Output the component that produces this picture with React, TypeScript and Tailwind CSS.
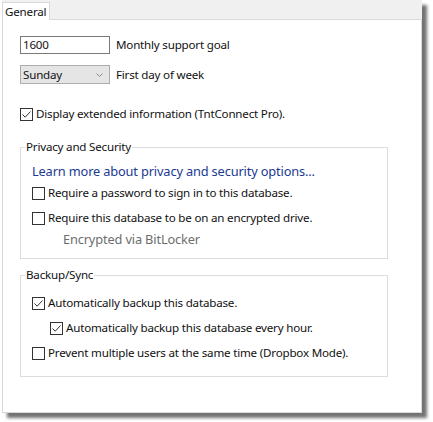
import React from "react";

const font = { fontFamily: '"Noto Sans", "Segoe UI", sans-serif' };

function Check({ checked }: { checked?: boolean }) {
  return (
    <span className="w-[13px] h-[13px] border border-[#333333] bg-white flex items-center justify-center shrink-0">
      {checked && (
        <svg width="11" height="11" viewBox="0 0 11 11">
          <path d="M1.5 5.5 L4.2 8.2 L9.5 2.5" fill="none" stroke="#333" strokeWidth="1" />
        </svg>
      )}
    </span>
  );
}

function CheckRow({ checked, label, className = "" }: { checked?: boolean; label: string; className?: string }) {
  return (
    <div className={"flex items-center h-4 gap-[3px] " + className}>
      <Check checked={checked} />
      <span className="whitespace-nowrap">{label}</span>
    </div>
  );
}

export default function App() {
  return (
    <div className="w-[433px] h-[422px] bg-white text-[11.6px] tracking-[-0.2px] text-[#111] pl-[2px]" style={font}>
      <div className="w-[420px] h-[413px] flex flex-col bg-white shadow-[5px_5px_3px_rgba(0,0,0,0.55)]">
        <div className="h-[20px] flex bg-[#f0f0f0] shrink-0">
          <div className="mt-[2px] w-[48px] bg-white border-l border-t border-r border-[#d9d9d9] flex items-center pl-[2px] leading-4">
            General
          </div>
          <div className="flex-1 border-b border-[#d9d9d9]" />
        </div>
        <div className="flex-1 border-l border-r border-b border-[#d9d9d9] pl-[17px] pt-[16px] leading-4">
          <div className="flex items-center gap-[6px]">
            <div className="w-[90px] h-[18px] border border-[#7a7a7a] flex items-center pl-[2px]">1600</div>
            <span>Monthly support goal</span>
          </div>
          <div className="flex items-center gap-[6px] mt-[11px]">
            <div className="w-[90px] h-[19px] border border-[#adadad] bg-[#e5e5e5] flex items-center justify-between pl-[2px] pr-[6px]">
              <span>Sunday</span>
              <svg width="7" height="4" viewBox="0 0 7 4">
                <path d="M0.5 0.5 L3.5 3.5 L6.5 0.5" fill="none" stroke="#8a8a8a" strokeWidth="1" />
              </svg>
            </div>
            <span>First day of week</span>
          </div>
          <CheckRow checked label="Display extended information (TntConnect Pro)." className="mt-[22px]" />

          <fieldset className="mt-[17px] w-[368px] border border-[#dcdcdc] pl-[11px] pb-[11px]">
            <legend className="ml-[-7px] px-[1px] leading-4">Privacy and Security</legend>
            <div className="mt-[8px] h-4 text-[12.8px] tracking-[-0.15px] text-[#1b3a91] whitespace-nowrap">Learn more about privacy and security options...</div>
            <CheckRow label="Require a password to sign in to this database." className="mt-[6px]" />
            <CheckRow label="Require this database to be on an encrypted drive." className="mt-[9px]" />
            <div className="mt-[5px] h-4 ml-[31px] text-[12.8px] tracking-[-0.15px] text-[#6d6d6d]">Encrypted via BitLocker</div>
          </fieldset>

          <fieldset className="mt-[8px] w-[368px] border border-[#dcdcdc] pl-[11px] pb-[15px]">
            <legend className="ml-[-7px] px-[1px] leading-4">Backup/Sync</legend>
            <CheckRow checked label="Automatically backup this database." className="mt-[12px]" />
            <CheckRow checked label="Automatically backup this database every hour." className="mt-[9px] ml-[18px]" />
            <CheckRow label="Prevent multiple users at the same time (Dropbox Mode)." className="mt-[9px]" />
          </fieldset>
        </div>
      </div>
    </div>
  );
}
